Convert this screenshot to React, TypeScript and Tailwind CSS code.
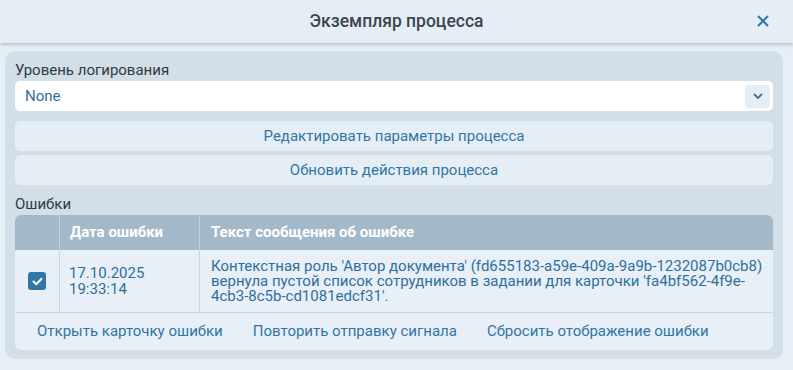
export default function App() {
  return (
    <div className="flex h-[370px] w-[793px] flex-col bg-[#e7eff6] font-['Roboto',sans-serif] text-[15px]">
      <header className="relative flex h-[43px] shrink-0 items-center justify-center bg-[#e6eef5] shadow-[0_2px_3px_rgba(120,145,170,0.45)]">
        <h1 className="text-[17.5px] font-medium text-[#3c4550]">Экземпляр процесса</h1>
        <button className="absolute right-[24px] top-[15px] text-[#2f78a8]">
          <svg width="12" height="12" viewBox="0 0 12 12" fill="none" stroke="currentColor" strokeWidth="2">
            <path d="M1 1l10 10M11 1L1 11" />
          </svg>
        </button>
      </header>

      <div className="ml-[5px] mr-[10px] mt-[8px] flex flex-col rounded-[10px] bg-[#d2dee8] px-[10px] pb-[9px] pt-[9px]">
        <label className="h-[20px] leading-[20px] text-[#333a40]">Уровень логирования</label>
        <div className="mt-[1px] flex h-[30px] items-center justify-between rounded-[5px] bg-white pl-[10px] pr-[3px]">
          <span className="text-[#2f6f9f]">None</span>
          <span className="flex h-[23px] w-[25px] items-center justify-center rounded-[4px] bg-[#e6eef5] text-[#2f78a8]">
            <svg width="10" height="6" viewBox="0 0 10 6" fill="none" stroke="currentColor" strokeWidth="1.8">
              <path d="M1 1l4 4 4-4" />
            </svg>
          </span>
        </div>
        <button className="mt-[10px] h-[30px] rounded-[5px] bg-[#e6eef5] text-[#2f76a6]">Редактировать параметры процесса</button>
        <button className="mt-[4px] h-[30px] rounded-[5px] bg-[#e6eef5] text-[#2f76a6]">Обновить действия процесса</button>

        <div className="mt-[9px] h-[21px] leading-[21px] text-[#333a40]">Ошибки</div>
        <div className="overflow-hidden rounded-[6px] bg-[#e8eff6]">
          <div className="grid h-[35px] grid-cols-[45px_140px_1fr] bg-[#a3b9c9] font-bold text-white">
            <div className="border-r border-[#c3d3df]" />
            <div className="flex items-center border-r border-[#c3d3df] pl-[10px]">Дата ошибки</div>
            <div className="flex items-center pl-[11px]">Текст сообщения об ошибке</div>
          </div>
          <div className="grid h-[63px] grid-cols-[45px_140px_1fr] border-b border-[#c6d6e3] text-[#2f6f9f]">
            <div className="flex items-center justify-center border-r border-[#c6d6e3]">
              <span className="flex h-[18px] w-[18px] items-center justify-center rounded-[3px] bg-[#2e77a6]">
                <svg width="11" height="9" viewBox="0 0 11 9" fill="none" stroke="white" strokeWidth="2" strokeLinecap="round" strokeLinejoin="round">
                  <path d="M1.5 4.5l2.8 2.8L9.5 1.8" />
                </svg>
              </span>
            </div>
            <div className="flex flex-col justify-center border-r border-[#c6d6e3] pl-[9px] leading-[16px]">
              <span>17.10.2025</span>
              <span>19:33:14</span>
            </div>
            <div className="flex items-center pl-[11px] pr-[8px] leading-[15px]">
              <p>
                Контекстная роль 'Автор документа' (fd655183-a59e-409a-9a9b-1232087b0cb8) вернула пустой список сотрудников в задании для карточки 'fa4bf562-4f9e-4cb3-8c5b-cd1081edcf31'.
              </p>
            </div>
          </div>
          <div className="flex h-[37px] items-center gap-[30px] pl-[22px] text-[#2f76a6]">
            <span>Открыть карточку ошибки</span>
            <span>Повторить отправку сигнала</span>
            <span>Сбросить отображение ошибки</span>
          </div>
        </div>
      </div>
    </div>
  );
}
